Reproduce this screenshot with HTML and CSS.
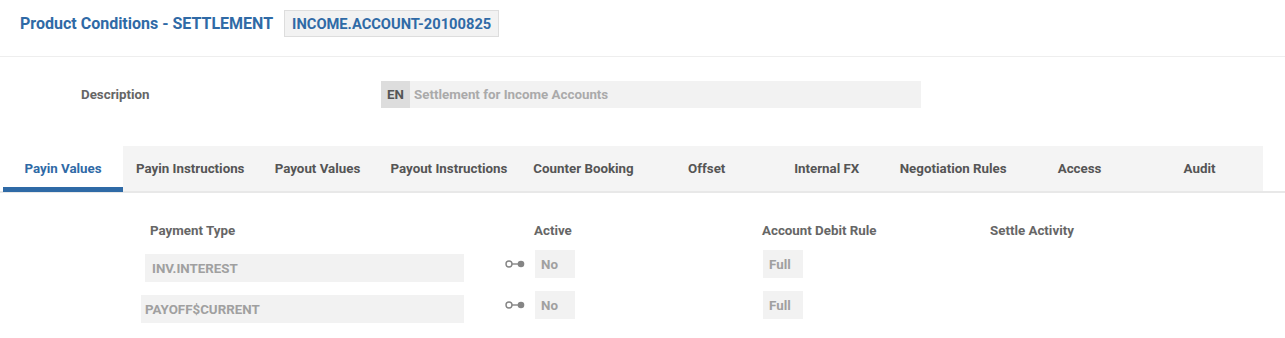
FILE: index.html
```html
<!DOCTYPE html>
<html lang="en">
  <head>
    <meta charset="UTF-8" />
    <title>Product Conditions - SETTLEMENT</title>
    <link rel="stylesheet" href="styles.css">
  </head>
  <body>
    <header class="page-header">
      <h1 class="page-title">Product Conditions - SETTLEMENT</h1>
      <span class="record-id">INCOME.ACCOUNT-20100825</span>
    </header>

    <section class="form-row">
      <label class="form-label">Description</label>
      <div class="lang-field">
        <span class="lang-code">EN</span>
        <span class="lang-value">Settlement for Income Accounts</span>
      </div>
    </section>

    <nav class="tabs">
      <a class="tab active">Payin Values</a>
      <div class="tab-strip">
        <a class="tab">Payin Instructions</a>
        <a class="tab">Payout Values</a>
        <a class="tab">Payout Instructions</a>
        <a class="tab">Counter Booking</a>
        <a class="tab">Offset</a>
        <a class="tab">Internal FX</a>
        <a class="tab">Negotiation Rules</a>
        <a class="tab">Access</a>
        <a class="tab">Audit</a>
      </div>
    </nav>

    <section class="grid">
      <div class="grid-head">
        <span class="col-type">Payment Type</span>
        <span class="col-active">Active</span>
        <span class="col-debit">Account Debit Rule</span>
        <span class="col-settle">Settle Activity</span>
      </div>

      <div class="grid-row">
        <span class="field type-field">INV.INTEREST</span>
        <span class="toggle-cell">
          <svg class="toggle-icon" width="20" height="8" viewBox="0 0 20 8">
            <circle cx="4" cy="4" r="3" fill="none" stroke="#858585" stroke-width="1.4"/>
            <line x1="7" y1="4" x2="13" y2="4" stroke="#858585" stroke-width="1.4"/>
            <circle cx="16" cy="4" r="3.3" fill="#858585"/>
          </svg>
          <span class="field small-field">No</span>
        </span>
        <span class="field small-field debit-field">Full</span>
      </div>

      <div class="grid-row">
        <span class="field type-field wide">PAYOFF$CURRENT</span>
        <span class="toggle-cell">
          <svg class="toggle-icon" width="20" height="8" viewBox="0 0 20 8">
            <circle cx="4" cy="4" r="3" fill="none" stroke="#858585" stroke-width="1.4"/>
            <line x1="7" y1="4" x2="13" y2="4" stroke="#858585" stroke-width="1.4"/>
            <circle cx="16" cy="4" r="3.3" fill="#858585"/>
          </svg>
          <span class="field small-field">No</span>
        </span>
        <span class="field small-field debit-field">Full</span>
      </div>
    </section>
  </body>
</html>
```

FILE: styles.css
```css
body {
  margin: 0;
  font-family: Roboto, "Liberation Sans", Arial, sans-serif;
  font-weight: bold;
  font-size: 13.33px;
  color: #666666;
  background: #ffffff;
}

.page-header {
  display: flex;
  align-items: center;
  gap: 11px;
  height: 27px;
  padding: 10px 0 19px 20px;
  border-bottom: 1px solid #eeeeee;
  margin-bottom: 24px;
}

.page-title {
  margin: 0;
  font-size: 16px;
  color: #2f6aa6;
}

.record-id {
  display: flex;
  align-items: center;
  height: 27px;
  box-sizing: border-box;
  padding: 0 7px;
  font-size: 14.7px;
  color: #2f6aa6;
  background: #f2f2f2;
  border: 1px solid #dddddd;
}

.form-row {
  display: flex;
  align-items: center;
  height: 27px;
  margin-bottom: 38px;
}

.form-label {
  width: 300px;
  padding-left: 81px;
  color: #666666;
}

.lang-field {
  display: flex;
  align-items: stretch;
  width: 540px;
  height: 27px;
  background: #f2f2f2;
}

.lang-code {
  display: flex;
  align-items: center;
  justify-content: center;
  width: 29px;
  background: #dddddd;
  color: #555555;
}

.lang-value {
  display: flex;
  align-items: center;
  padding-left: 4px;
  color: #aaaaaa;
}

.tabs {
  display: flex;
  height: 45px;
  padding-left: 3px;
  border-bottom: 2px solid #e8e8e8;
}

.tab-strip {
  display: flex;
  background: #f4f4f4;
  padding-right: 3px;
}

.tab {
  display: flex;
  align-items: center;
  justify-content: center;
  min-width: 120px;
  padding: 0 13px;
  box-sizing: border-box;
  color: #555555;
  cursor: pointer;
}

.tab.active {
  color: #2f6aa6;
  background: #ffffff;
  padding-top: 4px;
  border-bottom: 5px solid #2f6aa6;
  margin-bottom: -1px;
}

.grid {
  padding-top: 29px;
}

.grid-head {
  display: flex;
  height: 16px;
  align-items: center;
  margin-bottom: 12px;
}

.col-type {
  margin-left: 150px;
  width: 384px;
}

.col-active {
  width: 228px;
}

.col-debit {
  width: 228px;
}

.grid-row {
  display: flex;
  align-items: flex-start;
  height: 41px;
}

.field {
  display: flex;
  align-items: center;
  background: #f2f2f2;
  color: #a0a0a0;
  box-sizing: border-box;
}

.type-field {
  margin-top: 4px;
  margin-left: 145px;
  width: 319px;
  height: 28px;
  padding-left: 7px;
}

.type-field.wide {
  margin-left: 141px;
  width: 323px;
  padding-left: 4px;
}

.toggle-cell {
  display: flex;
  align-items: center;
  gap: 10px;
  margin-left: 41px;
}

.toggle-icon {
  display: block;
}

.small-field {
  width: 40px;
  height: 28px;
  padding-left: 6px;
}

.debit-field {
  margin-left: 188px;
}
```
